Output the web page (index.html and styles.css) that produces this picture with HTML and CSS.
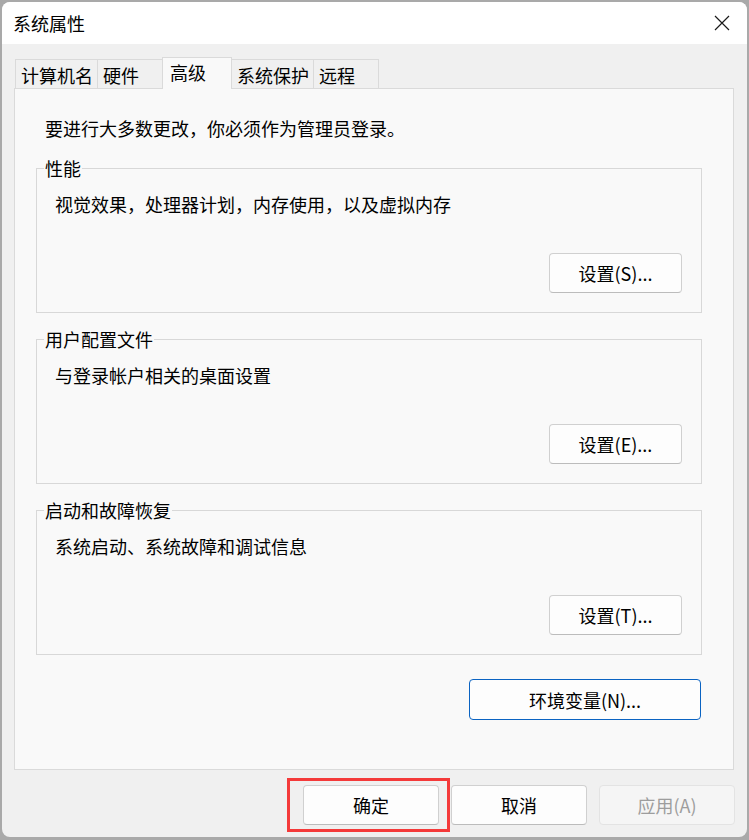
FILE: index.html
```html
<!DOCTYPE html>
<html lang="zh-CN">
<head>
<meta charset="utf-8">
<title>系统属性</title>
<link rel="stylesheet" href="styles.css">
</head>
<body>
<div class="window">
  <div class="titlebar">
    <span class="title">系统属性</span>
    <button class="close" aria-label="关闭">
      <svg width="16" height="16" viewBox="0 0 16 16"><path d="M1 1 L15 15 M15 1 L1 15" stroke="#1a1a1a" stroke-width="1.2" fill="none"/></svg>
    </button>
  </div>
  <div class="tabs">
    <div class="tab">计算机名</div>
    <div class="tab">硬件</div>
    <div class="tab active">高级</div>
    <div class="tab">系统保护</div>
    <div class="tab">远程</div>
  </div>
  <div class="panel">
    <p class="intro">要进行大多数更改，你必须作为管理员登录。</p>
    <fieldset class="group">
      <legend>性能</legend>
      <p class="desc">视觉效果，处理器计划，内存使用，以及虚拟内存</p>
      <div class="actions"><button class="btn btn-set">设置(S)...</button></div>
    </fieldset>
    <fieldset class="group">
      <legend>用户配置文件</legend>
      <p class="desc">与登录帐户相关的桌面设置</p>
      <div class="actions"><button class="btn btn-set">设置(E)...</button></div>
    </fieldset>
    <fieldset class="group">
      <legend>启动和故障恢复</legend>
      <p class="desc">系统启动、系统故障和调试信息</p>
      <div class="actions"><button class="btn btn-set">设置(T)...</button></div>
    </fieldset>
    <div class="env-row"><button class="btn btn-env">环境变量(N)...</button></div>
  </div>
  <div class="footer">
    <div class="ok-wrap">
      <button class="btn btn-foot">确定</button>
      <span class="highlight"></span>
    </div>
    <button class="btn btn-foot">取消</button>
    <button class="btn btn-foot" disabled>应用(A)</button>
  </div>
</div>
</body>
</html>
```

FILE: styles.css
```css
* { box-sizing: border-box; }

body {
  margin: 0;
  background: #a9a9a9;
  font-family: "Microsoft YaHei UI", "Noto Sans CJK SC", sans-serif;
  font-size: 18px;
  color: #000;
}

.window {
  margin: 2px 0 0 2px;
  width: 745px;
  height: 835px;
  background: #f0f0f0;
  border-radius: 8px;
  overflow: hidden;
}

.titlebar {
  height: 42px;
  background: #fff;
  display: flex;
  align-items: center;
  justify-content: space-between;
  padding-left: 11px;
}

.title { line-height: 24px; }

.close {
  width: 46px;
  height: 42px;
  margin-right: 2px;
  border: 0;
  padding: 0;
  background: transparent;
  display: flex;
  align-items: center;
  justify-content: center;
}

.tabs {
  display: flex;
  align-items: flex-end;
  height: 31px;
  margin: 13px 0 0 13px;
}

.tab {
  height: 29px;
  min-width: 66px;
  padding: 3px 4px 0 5px;
  line-height: 24px;
  border: 1px solid #dadada;
  border-bottom: 0;
  background: #f0f0f0;
  white-space: nowrap;
}

.tab + .tab { margin-left: -1px; }

.tab.active {
  height: 32px;
  min-width: 70px;
  margin-bottom: -1px;
  padding: 2px 5px 0 7px;
  background: #f9f9f9;
  position: relative;
  z-index: 1;
}

.panel {
  margin-left: 12px;
  width: 720px;
  height: 682px;
  border: 1px solid #dadada;
  background: #f9f9f9;
  padding: 27px 31px 0 21px;
}

.intro {
  margin: 0 0 0 9px;
  line-height: 24px;
}

.group {
  margin: 16px 0 0;
  padding: 0 19px 19px 18px;
  border: 1px solid #d8d8d8;
  min-inline-size: 0;
}

.group + .group { margin-top: 14px; }

.group legend {
  margin-left: -11px;
  padding: 0 1px;
  line-height: 24px;
}

.desc {
  margin: 12px 0 0;
  line-height: 24px;
}

.actions {
  display: flex;
  justify-content: flex-end;
  margin-top: 37px;
}

.btn {
  font: inherit;
  color: #000;
  background: #fdfdfd;
  border: 1px solid #d0d0d0;
  border-bottom-color: #bcbcbc;
  border-radius: 4px;
  padding: 0;
  line-height: 24px;
}

.btn-set {
  width: 133px;
  height: 40px;
}

.env-row {
  display: flex;
  justify-content: flex-end;
  margin: 24px 1px 0 0;
}

.btn-env {
  width: 232px;
  height: 41px;
  border-color: #0a63c2;
}

.footer {
  display: flex;
  justify-content: flex-end;
  gap: 12px;
  padding: 15px 12px 0 0;
}

.btn-foot {
  width: 136px;
  height: 40px;
}

.btn-foot:disabled {
  background: #f5f5f5;
  border-color: #e3e3e3;
  color: #9d9d9d;
}

.ok-wrap {
  position: relative;
  display: flex;
}

.highlight {
  position: absolute;
  left: -16px;
  right: -11px;
  top: -7px;
  bottom: -7px;
  border: 3px solid #f43a3a;
  pointer-events: none;
}
```
